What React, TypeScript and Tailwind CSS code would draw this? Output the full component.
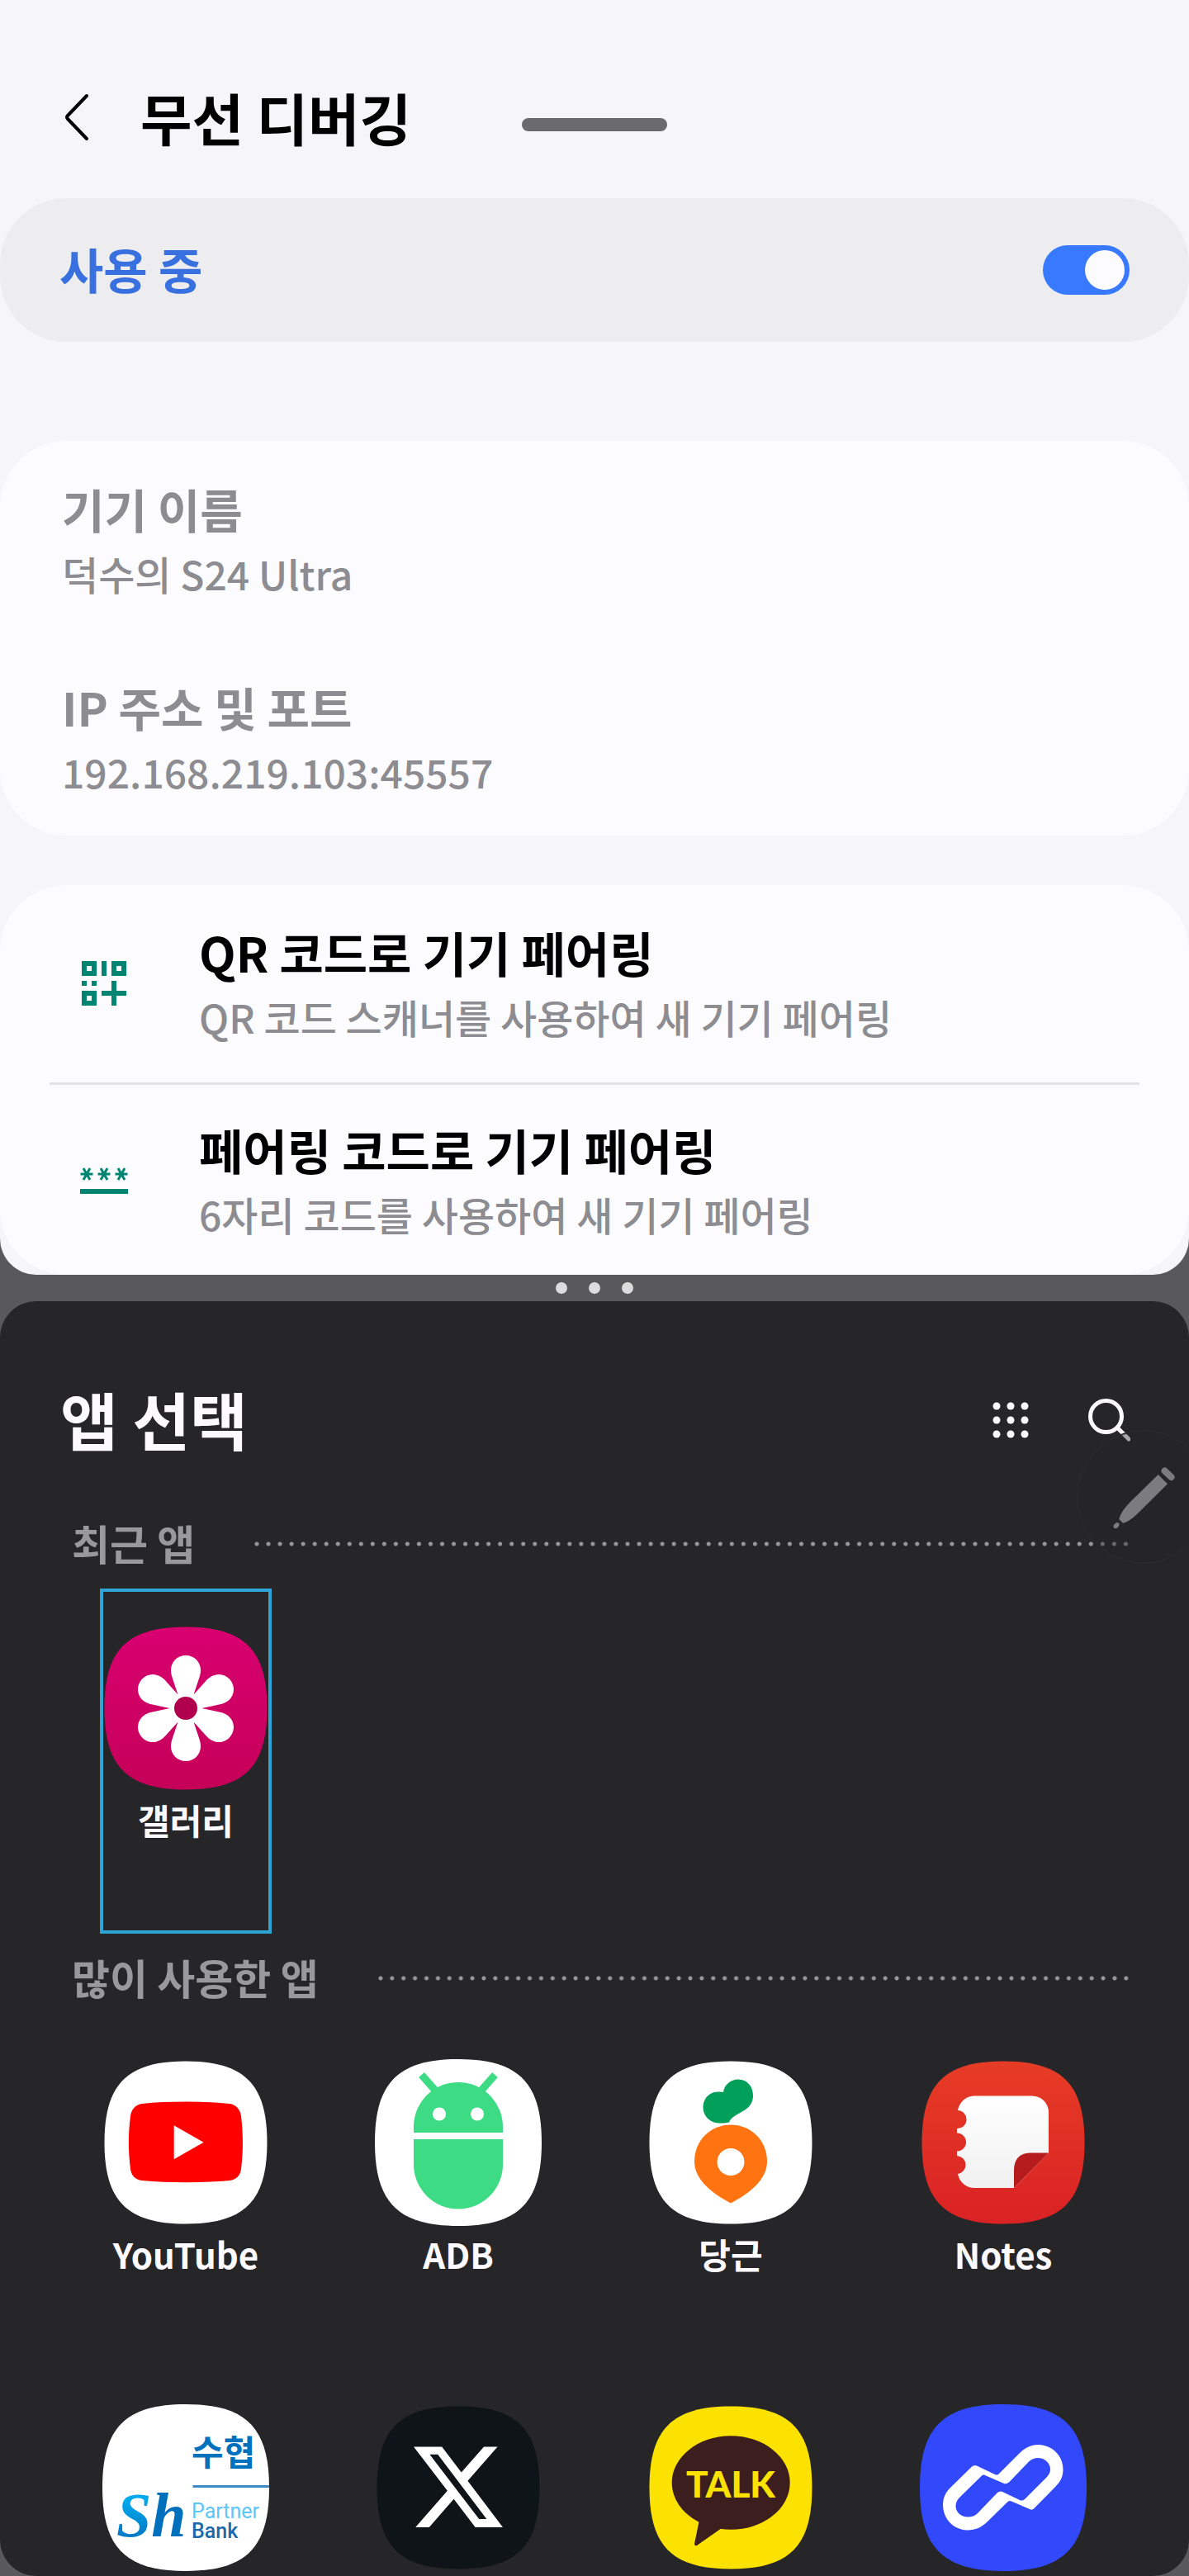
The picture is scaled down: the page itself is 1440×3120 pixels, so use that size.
import * as React from 'react';

interface InfoItem {
  label: string;
  value: string;
}

interface AppItem {
  name: string;
  icon: React.ReactNode;
}

const deviceInfo: InfoItem[] = [
  { label: '기기 이름', value: '덕수의 S24 Ultra' },
  { label: 'IP 주소 및 포트', value: '192.168.219.103:45557' },
];

const SQUIRCLE = 'M0 50C0 14 14 0 50 0S100 14 100 50 86 100 50 100 0 86 0 50Z';

const IconBase = ({ fill, large = false, children }: { fill: string; large?: boolean; children: React.ReactNode }) => (
  <svg viewBox="0 0 202 202" className="size-[202px] shrink-0" aria-hidden="true">
    <path d={SQUIRCLE} fill={fill} transform={large ? 'scale(2.02)' : 'translate(2.5 2.5) scale(1.97)'} />
    {children}
  </svg>
);

const GalleryIcon = () => (
  <IconBase fill="url(#gallery-bg)">
    <defs>
      <linearGradient id="gallery-bg" x1="0" y1="0" x2="0" y2="1">
        <stop offset="0" stopColor="#d90070" />
        <stop offset="1" stopColor="#c50058" />
      </linearGradient>
    </defs>
    {[0, 60, 120, 180, 240, 300].map((angle) => (
      <path
        key={angle}
        transform={`rotate(${angle} 101 101)`}
        d="M101 37C111.500 37 119 45 119 55C119 59 118 62 117 65L111 83L101 101L91 83L85 65C84 62 83 59 83 55C83 45 90.500 37 101 37Z"
        fill="#fff"
      />
    ))}
    <circle cx="101" cy="101" r="20" fill="#fff" />
    <circle cx="101" cy="101" r="14" fill="#b0004d" />
  </IconBase>
);

const YoutubeIcon = () => (
  <IconBase fill="#fff">
    <path
      d="M48 54C80 50.800 122 50.800 154 54C162 55 167 61 168 69C170.600 90 170.600 112 168 133C167 141 162 146 154 147C122 150 80 150 48 147C40 146 35 141 34 133C31.200 112 31.200 90 34 69C35 61 40 55 48 54Z"
      fill="#f00"
    />
    <path d="M86.700 80.200V121.200L122.600 100.700Z" fill="#fff" />
  </IconBase>
);

const AdbIcon = () => (
  <IconBase fill="#fff" large>
    <path d="M47 89V82a54 54 0 0 1 108 0V89Z" fill="#3ddc84" />
    <path d="M47 97H155V127.500a54 54 0 0 1-108 0Z" fill="#3ddc84" />
    <path d="M56.500 19L75 40M145.500 19L127 40" stroke="#3ddc84" strokeWidth="9" />
    <circle cx="78" cy="66.500" r="8" fill="#fff" />
    <circle cx="124" cy="66.500" r="8" fill="#fff" />
  </IconBase>
);

const KarrotIcon = () => (
  <IconBase fill="#fff">
    <path
      d="M92 40C93 31 101 24.500 110 24.500C121 24.500 128 33 128 44C128 51 125 57 119 61C110 67 101 70 99 76.500C95 77.500 92 77.500 88 77.500C76 77.500 67.500 69 67.500 58C67.500 47 76 39.500 86 39.500Q89 39.300 92 40Z"
      fill="#00a05b"
    />
    <path
      d="M101 79.500C125 79.500 145 98 145 124C145 145 125 162 101 174.500C77 162 57 145 57 124C57 98 77 79.500 101 79.500Z"
      fill="#ff7310"
    />
    <circle cx="101" cy="124.500" r="16.500" fill="#fff" />
  </IconBase>
);

const NotesIcon = () => (
  <IconBase fill="url(#notes-bg)">
    <defs>
      <linearGradient id="notes-bg" x1="0" y1="0" x2="0" y2="1">
        <stop offset="0" stopColor="#e63c26" />
        <stop offset="1" stopColor="#da2224" />
      </linearGradient>
      <linearGradient id="notes-page" x1="0" y1="0" x2="0" y2="1">
        <stop offset="0" stopColor="#fff" />
        <stop offset="1" stopColor="#f0f0f0" />
      </linearGradient>
    </defs>
    <path
      d="M66 44.500H136A20 20 0 0 1 156 64.500V113.500L114 156H66C56 156 48 149 46 139A11 11 0 0 0 46 117.200H45V111.500A11 11 0 0 0 45 89.500V84A11 11 0 0 0 46 62C48 52 56 44.500 66 44.500Z"
      fill="url(#notes-page)"
    />
    <path d="M114 156V135Q114 113.500 135 113.500H156Z" fill="#b71c1c" />
  </IconBase>
);

const SuhyupIcon = () => (
  <IconBase fill="#fff" large>
    <defs>
      <clipPath id="suhyup-clip">
        <path d={SQUIRCLE} transform="scale(2.02)" />
      </clipPath>
      <linearGradient id="suhyup-s" x1="0" y1="0" x2="0" y2="1">
        <stop offset="0.300" stopColor="#00a8ec" />
        <stop offset="1" stopColor="#0068b6" />
      </linearGradient>
    </defs>
    <g clipPath="url(#suhyup-clip)">
      <text x="108" y="74" fontSize="42" fontWeight="700" fill="#0071bc" className="font-['Noto_Sans_CJK_KR',sans-serif]">
        수협
      </text>
      <path d="M109.500 99.500H202" stroke="#3f8ac4" strokeWidth="3" />
      <text
        x="17"
        y="160"
        fontStyle="italic"
        fontWeight="700"
        fontSize="76"
        fill="url(#suhyup-s)"
        className="font-['Liberation_Serif',serif]"
      >
        S<tspan fill="#0070bd">h</tspan>
      </text>
      <g fontSize="25" className="font-[Roboto,sans-serif]">
        <text x="108" y="138" fill="#5cc6f6">Partner</text>
        <text x="108" y="162" fill="#1a68ad" fontWeight="500">Bank</text>
      </g>
    </g>
  </IconBase>
);

const XIcon = () => (
  <IconBase fill="#0e1418">
    <path
      transform="translate(40.800 40.200) scale(5)"
      d="M18.244 2.250h3.308l-7.227 8.260 8.502 11.240H16.170l-5.214-6.817L4.990 21.750H1.680l7.730-8.835L1.254 2.250H8.080l4.713 6.231zm-1.161 17.520h1.833L7.084 4.126H5.117z"
      fill="#fff"
    />
  </IconBase>
);

const TalkIcon = () => (
  <IconBase fill="#fce200">
    <ellipse cx="101.200" cy="95" rx="71.500" ry="56.700" fill="#3c1e1e" />
    <path d="M62.800 141L57 169Q57 172 60 171L90 150Z" fill="#3c1e1e" />
    <text
      x="101"
      y="113"
      textAnchor="middle"
      fontSize="44"
      fontWeight="900"
      fill="#fce200"
      className="font-[Lato,sans-serif]"
    >
      TALK
    </text>
  </IconBase>
);

const LinkIcon = () => (
  <IconBase fill="#3248fb" large>
    <path
      fillRule="evenodd"
      fill="#fff"
      d="M69 74.500L91 85Q94 86.500 96 84L120 60C127 53 134 49 143 49C160 49 173.500 62 173.500 79C173.500 88 170 94 165 99L138 126.500Q136 128.500 133 127L111 117.500Q108 116 106 118.500L82 142C75 149 67 152.500 58 152.500C41 152.500 28 139 28 122C28 113 31 107 37 101L63 75.500Q66 73 69 74.500ZM80 86.500Q77 84.500 74.500 87L49 112C45 116 43.500 119 43.500 123C43.500 131 50 136.500 58 136.500C63 136.500 67 135 70 132L94 107Q97 104.500 100 106L121 116Q124 117.500 127 115L152 90C156 86 158 83 158 79C158 71 151 65 143 65C139 65 135 66.500 132 69.500L108 94.500Q105 97 102 96Z"
    />
  </IconBase>
);

const recentApps: AppItem[] = [{ name: '갤러리', icon: <GalleryIcon /> }];

const frequentApps: AppItem[] = [
  { name: 'YouTube', icon: <YoutubeIcon /> },
  { name: 'ADB', icon: <AdbIcon /> },
  { name: '당근', icon: <KarrotIcon /> },
  { name: 'Notes', icon: <NotesIcon /> },
];

const bottomApps: AppItem[] = [
  { name: '수협 파트너뱅크', icon: <SuhyupIcon /> },
  { name: 'X', icon: <XIcon /> },
  { name: '카카오톡', icon: <TalkIcon /> },
  { name: 'Link', icon: <LinkIcon /> },
];

const QrIcon = () => (
  <svg viewBox="0 0 10 10" className="size-[60px] shrink-0" fill="#008573" shapeRendering="crispEdges" aria-hidden="true">
    <g transform="translate(.5 .5)">
      <path fillRule="evenodd" d="M0 0H3V3H0ZM1 1V2H2V1ZM6 0H9V3H6ZM7 1V2H8V1ZM0 6H3V9H0ZM1 7V8H2V7Z" />
      <path d="M4 0H5V3H4ZM0 4H1V5H0ZM2 4H3V5H2ZM6 4H7V6H9V7H7V9H6V7H4V6H6Z" />
    </g>
  </svg>
);

const CodeIcon = () => (
  <svg viewBox="0 0 60 60" className="size-[60px] shrink-0" stroke="#008573" aria-hidden="true">
    <path d="M1 43H59" strokeWidth="6" />
    {[9, 30, 51].map((x) => (
      <path key={x} transform={`translate(${x} 22)`} d="M-7.500 0H7.500M-4 -7L4 7M4 -7L-4 7" strokeWidth="3" />
    ))}
  </svg>
);

const PairingRow = ({ icon, title, description, className }: { icon: React.ReactNode; title: string; description: string; className: string }) => (
  <button type="button" className={`flex w-full items-center gap-[85px] pl-24 pr-[60px] text-left ${className}`}>
    {icon}
    <span className="min-w-0">
      <span className="block text-[58px] font-bold leading-[80px] text-black">{title}</span>
      <span className="block text-[48px] font-medium leading-[76px] text-[#8c8c91]">{description}</span>
    </span>
  </button>
);

const SectionTitle = ({ children }: { children: React.ReactNode }) => (
  <div className="flex items-center gap-[68px] pl-[87px] pr-[69px]">
    <h2 className="shrink-0 pb-1 text-[50px] font-bold leading-[60px] text-[#98989d]">{children}</h2>
    <div className="h-[6px] flex-1 bg-[radial-gradient(circle,#98989d_2px,transparent_3px)] bg-[length:14px_6px] bg-repeat-round" />
  </div>
);

const AppTile = ({ app, selected = false }: { app: AppItem; selected?: boolean }) => (
  <button
    type="button"
    className={`flex h-[418px] w-[208px] flex-col items-center justify-self-center border-4 pt-10 ${
      selected ? 'border-[#2fa4d7]' : 'border-transparent'
    }`}
  >
    {app.icon}
    <span className="mt-[6px] text-[42px] font-bold leading-[56px] text-[#fcfaff]">{app.name}</span>
  </button>
);

const SettingsPanel = () => {
  const [enabled, setEnabled] = React.useState(true);

  return (
    <section className="relative overflow-hidden rounded-b-[44px] bg-[#f6f6f8]">
      <div className="absolute left-1/2 top-[143px] h-4 w-44 -translate-x-1/2 rounded-full bg-[#6b6b6d]" />
      <header className="flex items-center gap-[62px] pb-[50px] pl-[76px] pt-[94px]">
        <button type="button" aria-label="뒤로">
          <svg viewBox="0 0 32 60" className="h-[60px] w-8" fill="none" stroke="#000" strokeWidth="4" strokeLinecap="round" strokeLinejoin="round">
            <path d="M29 4L6 28Q4 30 6 32L29 56" />
          </svg>
        </button>
        <h1 className="text-[68px] font-bold leading-[96px] text-black">무선 디버깅</h1>
      </header>

      <div className="flex items-center justify-between rounded-[80px] bg-[#ededef] px-[72px] py-[57px]">
        <label htmlFor="debugging" className="pb-1 text-[58px] font-bold leading-[56px] text-[#3870df]">
          사용 중
        </label>
        <input
          id="debugging"
          type="checkbox"
          checked={enabled}
          onChange={(e) => setEnabled(e.target.checked)}
          className="flex h-[60px] w-[105px] appearance-none items-center rounded-full bg-gray-400 p-[6px] before:block before:size-12 before:rounded-full before:bg-[#fcfcff] checked:justify-end checked:bg-[#387aff]"
        />
      </div>

      <dl className="mt-[120px] flex flex-col gap-[84px] rounded-[80px] bg-[#fcfcff] px-[75px] pb-10 pt-[42px] text-[#8c8c91]">
        {deviceInfo.map((item) => (
          <div key={item.label}>
            <dt className="text-[56px] font-bold leading-[80px]">{item.label}</dt>
            <dd className="text-[48px] font-medium leading-[76px]">{item.value}</dd>
          </div>
        ))}
      </dl>

      <div className="mt-[60px] rounded-[80px] bg-[#fcfcff]">
        <PairingRow
          icon={<QrIcon />}
          title="QR 코드로 기기 페어링"
          description="QR 코드 스캐너를 사용하여 새 기기 페어링"
          className="pb-[42px] pt-[41px]"
        />
        <hr className="mx-[60px] border-t-[3px] border-[#e3e3e6]" />
        <PairingRow
          icon={<CodeIcon />}
          title="페어링 코드로 기기 페어링"
          description="6자리 코드를 사용하여 새 기기 페어링"
          className="pb-9 pt-[38px]"
        />
      </div>
    </section>
  );
};

const AppPicker = () => (
  <section className="relative flex-1 overflow-hidden rounded-[44px] bg-[#262628] pb-[6px] pt-[100px]">
    <header className="flex items-center pl-[73px] pr-[71px]">
      <h1 className="flex-1 pb-1 text-[76px] font-bold leading-[84px] text-[#fcfaff]">앱 선택</h1>
      <button type="button" aria-label="모든 앱" className="mr-[69px]">
        <svg viewBox="0 0 48 48" className="size-12" fill="#fcfaff">
          {[7, 24, 41].map((y) => [7, 24, 41].map((x) => <circle key={`${x}-${y}`} cx={x} cy={y} r="4.500" />))}
        </svg>
      </button>
      <button type="button" aria-label="검색">
        <svg viewBox="0 0 52 52" className="size-[52px]" fill="none" stroke="#fcfaff" strokeWidth="5" strokeLinecap="round">
          <circle cx="22.500" cy="21.500" r="19" />
          <path d="M37 36L50 49" />
        </svg>
      </button>
    </header>

    <div className="mt-[74px]">
      <SectionTitle>최근 앱</SectionTitle>
    </div>
    <div className="mt-[22px] grid grid-cols-4 px-[60px]">
      {recentApps.map((app) => (
        <AppTile key={app.name} app={app} selected />
      ))}
    </div>

    <div className="mt-[22px]">
      <SectionTitle>많이 사용한 앱</SectionTitle>
    </div>
    <div className="mt-[22px] grid grid-cols-4 px-[60px]">
      {frequentApps.map((app) => (
        <AppTile key={app.name} app={app} />
      ))}
      {bottomApps.map((app) => (
        <button key={app.name} type="button" aria-label={app.name} className="justify-self-center pt-11">
          {app.icon}
        </button>
      ))}
    </div>

    {/* floating pen handle, half tucked behind the right edge */}
    <button
      type="button"
      aria-label="에어 커맨드"
      className="absolute -right-6 top-[158px] size-[158px] rounded-full bg-[#262628]/40 ring-2 ring-[#2a2a2c]"
    >
      <svg viewBox="0 0 158 158" className="size-[158px]" fill="#7c7c80">
        <path d="M104.500 47.500L112.500 55" stroke="#7c7c80" strokeWidth="8" strokeLinecap="round" />
        <path d="M96.700 52L108 63.300L74 97C67 104 61 109 54 110.700L49.300 106C51 99 56 92 63 85Z" />
        <ellipse cx="46" cy="113.700" rx="4" ry="2.800" transform="rotate(-45 46 113.700)" />
      </svg>
    </button>
  </section>
);

export default function App() {
  return (
    <main className="flex min-h-screen flex-col bg-[#59595b] font-['Noto_Sans_CJK_KR',sans-serif]">
      <SettingsPanel />
      <div className="flex h-8 items-center justify-center gap-[26px]">
        <span className="size-[14px] rounded-full bg-[#dcdcdc]" />
        <span className="size-[14px] rounded-full bg-[#dcdcdc]" />
        <span className="size-[14px] rounded-full bg-[#dcdcdc]" />
      </div>
      <AppPicker />
    </main>
  );
}
